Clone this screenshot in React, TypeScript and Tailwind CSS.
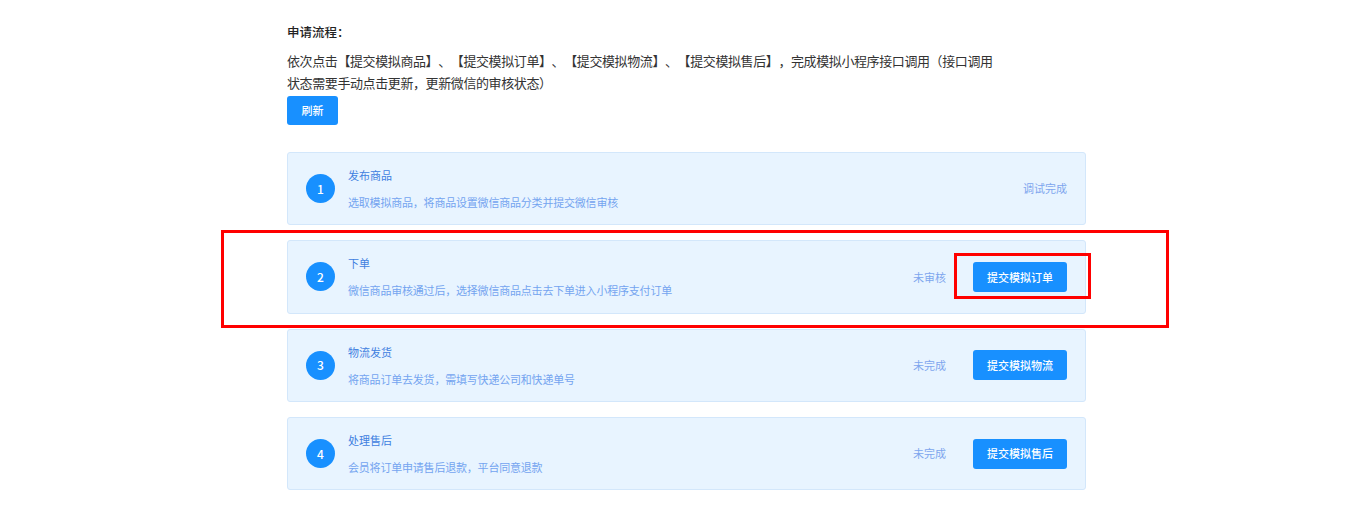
const steps = [
  { no: 1, title: '发布商品', desc: '选取模拟商品，将商品设置微信商品分类并提交微信审核', status: '调试完成', action: '' },
  { no: 2, title: '下单', desc: '微信商品审核通过后，选择微信商品点击去下单进入小程序支付订单', status: '未审核', action: '提交模拟订单' },
  { no: 3, title: '物流发货', desc: '将商品订单去发货，需填写快递公司和快递单号', status: '未完成', action: '提交模拟物流' },
  { no: 4, title: '处理售后', desc: '会员将订单申请售后退款，平台同意退款', status: '未完成', action: '提交模拟售后' }
];

export default function App() {
  return (
    <div className="min-h-[517px] bg-white font-['Noto_Sans_CJK_SC','Noto_Sans',sans-serif] [text-spacing-trim:space-all]">
      <div className="ml-[287px] w-[799px] pt-[22px]">
        <h3 className="text-[12.5px] leading-[20px] font-medium text-[#222]">申请流程：</h3>
        <p className="mt-2 w-[760px] text-[13px] leading-[22px] tracking-[-0.4px] text-[#333]">
          依次点击【提交模拟商品】、【提交模拟订单】、【提交模拟物流】、【提交模拟售后】，完成模拟小程序接口调用（接口调用
          <br />
          状态需要手动点击更新，更新微信的审核状态）
        </p>
        <button className="mt-[2px] h-[29px] w-[51px] rounded-[3px] bg-[#1890ff] text-[11px] font-medium text-white">刷新</button>

        <div className="mt-[27px] flex flex-col gap-[15px]">
          {steps.map((step) => (
            <div
              key={step.no}
              className="relative flex h-[73.33px] items-center rounded-[3px] border border-[#d3e7fb] bg-[#e8f4ff] pl-[18px] pr-[18px]"
            >
              <div className="flex h-[29px] w-[29px] shrink-0 items-center justify-center rounded-full bg-[#1890ff] text-[12px] font-medium text-white">
                {step.no}
              </div>
              <div className="ml-[13px] flex flex-1 flex-col">
                <div className="text-[11px] leading-[16px] text-[#3f80df]">{step.title}</div>
                <div className="mt-[11px] text-[11px] leading-[16px] tracking-[-0.2px] text-[#74a4f0]">{step.desc}</div>
              </div>
              <span className="text-[11px] text-[#7ea6ee]">{step.status}</span>
              {step.action && (
                <button className="relative ml-[27px] h-[30px] w-[94px] rounded-[3px] bg-[#1890ff] text-[11px] font-medium text-white">
                  {step.action}
                  {step.no === 2 && (
                    <span className="pointer-events-none absolute -left-[19px] -top-[9px] -right-[24px] -bottom-[7px] border-[3px] border-[#ff0000]" />
                  )}
                </button>
              )}
              {step.no === 2 && (
                <span className="pointer-events-none absolute -left-[67px] -top-[11px] -right-[84px] -bottom-[15px] border-[3px] border-[#ff0000]" />
              )}
            </div>
          ))}
        </div>
      </div>
    </div>
  );
}
